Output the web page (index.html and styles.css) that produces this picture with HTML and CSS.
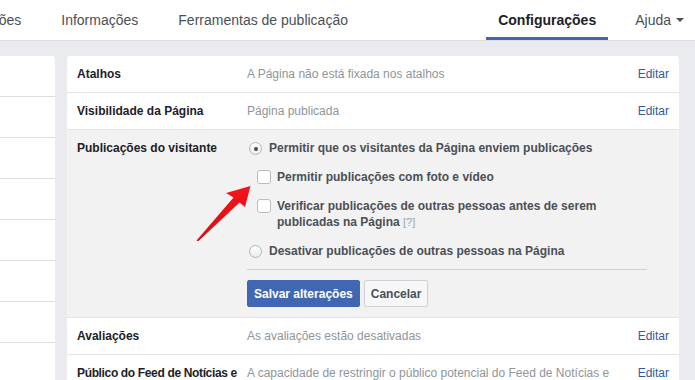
FILE: index.html
```html
<!DOCTYPE html>
<html lang="pt">
<head>
    <meta charset="UTF-8">
    <title>Configurações</title>
    <link rel="stylesheet" href="styles.css">
</head>
<body>
    <!-- Top Tabs -->
    <nav class="tabs">
        <a class="tab tab-cut">Notificações</a>
        <a class="tab">Informações</a>
        <a class="tab">Ferramentas de publicação</a>
        <a class="tab tab-active">Configurações</a>
        <a class="tab tab-help">Ajuda <span class="caret"></span></a>
    </nav>

    <div class="page">
        <!-- Side Menu -->
        <aside class="side-menu">
            <div class="side-item"></div>
            <div class="side-item"></div>
            <div class="side-item"></div>
            <div class="side-item"></div>
            <div class="side-item"></div>
            <div class="side-item"></div>
            <div class="side-item"></div>
            <div class="side-item"></div>
        </aside>

        <!-- Settings Card -->
        <main class="settings">
            <div class="row">
                <div class="label">Atalhos</div>
                <div class="value">A Página não está fixada nos atalhos</div>
                <a class="edit">Editar</a>
            </div>
            <div class="row">
                <div class="label">Visibilidade da Página</div>
                <div class="value">Página publicada</div>
                <a class="edit">Editar</a>
            </div>

            <div class="row row-open">
                <div class="label">Publicações do visitante</div>
                <div class="options">
                    <div class="option">
                        <span class="radio radio-on"></span>
                        <span>Permitir que os visitantes da Página enviem publicações</span>
                    </div>
                    <div class="option option-sub">
                        <span class="check"></span>
                        <span>Permitir publicações com foto e vídeo</span>
                    </div>
                    <div class="option option-sub">
                        <span class="check"></span>
                        <span>Verificar publicações de outras pessoas antes de serem publicadas na Página <span class="hint">[?]</span></span>
                    </div>
                    <div class="option">
                        <span class="radio"></span>
                        <span>Desativar publicações de outras pessoas na Página</span>
                    </div>
                    <div class="actions">
                        <button class="btn btn-primary">Salvar alterações</button>
                        <button class="btn">Cancelar</button>
                    </div>
                </div>

                <!-- Red arrow annotation -->
                <svg class="arrow" width="56" height="56" viewBox="195 185 56 56">
                    <defs>
                        <linearGradient id="arrowFill" x1="0" y1="0" x2="0" y2="1">
                            <stop offset="0" stop-color="#f2161c"/>
                            <stop offset="1" stop-color="#d80e12"/>
                        </linearGradient>
                    </defs>
                    <polygon points="196.5,240.5 233.5,197.5 226,193 250.5,186 245,207 239.5,202.5 198,241.5" fill="url(#arrowFill)"/>
                </svg>
            </div>

            <div class="row">
                <div class="label">Avaliações</div>
                <div class="value">As avaliações estão desativadas</div>
                <a class="edit">Editar</a>
            </div>
            <div class="row">
                <div class="label label-tight">Público do Feed de Notícias e visibilidade das publicações</div>
                <div class="value">A capacidade de restringir o público potencial do Feed de Notícias e limitar a visibilidade das publicações está desativada</div>
                <a class="edit">Editar</a>
            </div>
        </main>
    </div>
</body>
</html>
```

FILE: styles.css
```css
/* General Reset */
* {
    margin: 0;
    padding: 0;
    box-sizing: border-box;
}

body {
    font-family: 'Liberation Sans', Helvetica, Arial, sans-serif;
    background: #e9ebee;
    color: #1d2129;
    overflow: hidden;
}

/* Top Tabs */
.tabs {
    display: flex;
    height: 41px;
    background: #fff;
    border-bottom: 1px solid #dddfe2;
    overflow: hidden;
    font-size: 14px;
}

.tab {
    display: flex;
    align-items: center;
    padding: 0 20px;
    color: #4b4f56;
    white-space: nowrap;
    border-bottom: 3px solid transparent;
    padding-top: 3px;
}

.tab-cut {
    margin-left: -55px;
    padding-left: 0;
}

.tab-active {
    margin-left: auto;
    padding: 3px 12px 0;
    font-weight: bold;
    color: #1d2129;
    border-bottom-color: #4267b2;
}

.tab-help {
    margin-left: 15px;
    padding: 3px 11px 0 12px;
}

.caret {
    margin-left: 5px;
    border-top: 4px solid #4b4f56;
    border-left: 4px solid transparent;
    border-right: 4px solid transparent;
}

/* Page Layout */
.page {
    display: flex;
    gap: 12px;
    padding: 15px 16px 0 0;
}

.side-menu {
    width: 55px;
    flex-shrink: 0;
    background: #fff;
    border-radius: 0 3px 0 0;
    height: 400px;
}

.side-item {
    height: 41px;
    border-bottom: 1px solid #dddfe2;
}

/* Settings Card */
.settings {
    flex: 1;
    background: #fff;
    border-radius: 3px 3px 0 0;
    font-size: 12px;
    line-height: 16px;
}

.row {
    position: relative;
    display: grid;
    grid-template-columns: 164px 1fr auto;
    column-gap: 6px;
    padding: 10px;
    border-bottom: 1px solid #e5e5e5;
}

.label {
    font-weight: bold;
    color: #1d2129;
}

.label-tight {
    letter-spacing: -0.35px;
}

.value {
    color: #90949c;
    padding-right: 10px;
}

.edit {
    color: #365899;
}

/* Open Section */
.row-open {
    background: #f2f2f2;
}

.options {
    grid-column: 2 / 4;
    width: 400px;
    display: flex;
    flex-direction: column;
    gap: 13px;
    font-weight: bold;
    color: #4b4f56;
}

.option {
    display: flex;
    align-items: flex-start;
    gap: 7px;
    padding-left: 2px;
}

.option-sub {
    padding-left: 10px;
    gap: 6px;
}

.hint {
    font-weight: normal;
    font-size: 11px;
    color: #a0a3a8;
}

.radio {
    flex-shrink: 0;
    width: 13px;
    height: 13px;
    margin-top: 2px;
    border-radius: 50%;
    border: 1px solid #b4b4b4;
    background: linear-gradient(#fff, #ececec);
    display: flex;
    align-items: center;
    justify-content: center;
}

.radio-on::after {
    content: '';
    width: 4px;
    height: 4px;
    border-radius: 50%;
    background: #4a4a4a;
}

.check {
    flex-shrink: 0;
    width: 14px;
    height: 14px;
    margin-top: 1px;
    border-radius: 3px;
    border: 1px solid #bcbcbc;
    background: #fff;
}

/* Buttons */
.actions {
    display: flex;
    gap: 4px;
    margin-top: -3px;
    padding-top: 10px;
    border-top: 1px solid #cfd1d5;
}

.btn {
    height: 27px;
    padding: 0 6px;
    font-family: inherit;
    font-size: 12px;
    font-weight: bold;
    color: #4b4f56;
    background: #f6f7f9;
    border: 1px solid #ced0d4;
    border-radius: 2px;
}

.btn-primary {
    color: #fff;
    background: #4267b2;
    border-color: #4267b2;
}

/* Arrow Annotation */
.arrow {
    position: absolute;
    left: 128px;
    top: 55px;
}
```
